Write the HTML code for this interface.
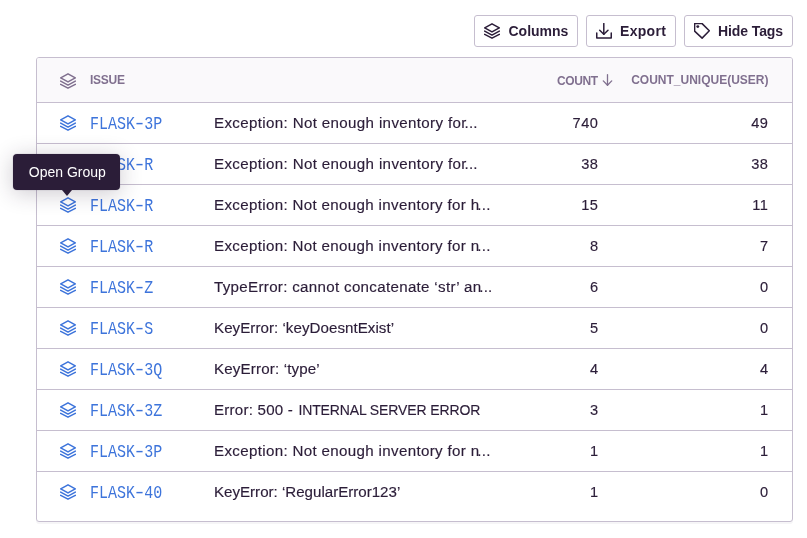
<!DOCTYPE html>
<html><head><meta charset="utf-8">
<style>
*{box-sizing:border-box;margin:0;padding:0}
.wrap{position:absolute;left:0;top:0;width:807px;height:538px;will-change:transform}
html,body{width:807px;height:538px;background:#fff;overflow:hidden;font-family:"Liberation Sans",sans-serif;color:#2b1d38}
.abs{position:absolute}
.btn{position:absolute;top:15px;height:32px;border:1px solid #c6becf;border-radius:3px;background:#fff}
.btn svg{position:absolute;top:7px}
.btn span{position:absolute;top:7.3px;font-weight:bold;font-size:14px;line-height:16px;color:#2b1d38;white-space:nowrap}
.panel{position:absolute;left:36px;top:57px;width:757px;height:465px;border:1px solid #c6becf;border-radius:3px;box-shadow:0 2px 0 rgba(37,11,54,0.04);overflow:hidden;background:#fff}
.hdr{position:absolute;left:0;top:0;width:755px;height:45px;background:#faf9fb;border-bottom:1px solid #c6becf}
.hdr span{position:absolute;font-weight:bold;font-size:12px;line-height:14px;color:#80708f;white-space:nowrap}
.row{position:absolute;left:0;width:755px;height:41px;border-bottom:1px solid #c6becf}
.row svg{position:absolute;left:23px;top:12px}
.row .id{position:absolute;left:53.1px;top:13.0px;transform:scaleY(1.18);transform-origin:0 50%;font-family:"Liberation Mono",monospace;font-size:15px;line-height:18px;color:#3d74db;white-space:nowrap}
.row .d{position:absolute;left:177px;top:10.5px;-webkit-text-stroke:0.15px #2b1d38;transform:scaleX(1.08);transform-origin:0 50%;font-size:14px;line-height:18px;white-space:nowrap;color:#2b1d38}
.dash{display:inline-block;transform:translateY(0.6px) scaleX(1.5)}
.row .ell{letter-spacing:0.2px;margin-left:-2px}
.row .n1{-webkit-text-stroke:0.15px #2b1d38;position:absolute;right:194px;top:10.5px;font-size:14.6px;line-height:18px;text-align:right;letter-spacing:0.6px;margin-right:-0.6px}
.row .n2{-webkit-text-stroke:0.15px #2b1d38;position:absolute;right:24px;top:10.5px;font-size:14.6px;line-height:18px;text-align:right;letter-spacing:0.6px;margin-right:-0.6px}
.tip{position:absolute;left:13px;top:154px;width:107px;height:36px;background:#2b1d38;border-radius:4px;box-shadow:0 0 0 1px rgba(43,29,56,0.05),0 3px 22px rgba(43,29,56,0.24)}
.tip span{position:absolute;left:15.8px;top:9px;font-size:14px;line-height:18px;color:#fff;white-space:nowrap}
.arrow{position:absolute;left:62.3px;top:189.5px;width:0;height:0;border-left:5.3px solid transparent;border-right:5.3px solid transparent;border-top:6.6px solid #2b1d38}
</style></head><body><div class="wrap">

<div class="btn" style="left:474px;width:104px">
  <svg style="left:9px" width="16" height="16" viewBox="0 0 16 16" fill="none" stroke="#2b1d38" stroke-width="1.5" stroke-linejoin="round" stroke-linecap="round"><path d="M8 0.8L15.3 4.9L8 8.9L0.7 4.9Z"/><path d="M0.7 8.1L8 12.1L15.3 8.1"/><path d="M0.7 11.3L8 15.2L15.3 11.3"/></svg>
  <span style="left:33.5px">Columns</span>
</div>
<div class="btn" style="left:586px;width:90px">
  <svg style="left:9px" width="16" height="16" viewBox="0 0 16 16" fill="none" stroke="#2b1d38" stroke-width="1.5" stroke-linejoin="round" stroke-linecap="round"><path d="M7.8 0.6V11.2"/><path d="M3.7 7.2L7.8 11.3L12.0 7.2"/><path d="M0.75 9.9V15.1H15.25V9.9"/></svg>
  <span style="left:33px;letter-spacing:0.3px">Export</span>
</div>
<div class="btn" style="left:684px;width:109px">
  <svg style="left:9px" width="16" height="16" viewBox="0 0 16 16" fill="none" stroke="#2b1d38" stroke-width="1.5" stroke-linejoin="round"><path d="M0.6 0.6H8.1L15.3 7.8L8.1 15.1L0.6 8.1Z"/><circle cx="3.8" cy="3.6" r="1.45" fill="#2b1d38" stroke="none"/></svg>
  <span style="left:33px;letter-spacing:-0.1px">Hide Tags</span>
</div>

<div class="panel">
  <div class="hdr">
    <svg class="abs" style="left:23px;top:15px" width="16" height="16" viewBox="0 0 16 16" fill="none" stroke="#80708f" stroke-width="1.5" stroke-linejoin="round" stroke-linecap="round"><path d="M8 0.8L15.3 4.9L8 8.9L0.7 4.9Z"/><path d="M0.7 8.1L8 12.1L15.3 8.1"/><path d="M0.7 11.3L8 15.2L15.3 11.3"/></svg>
    <span style="left:53px;top:15.4px;letter-spacing:-0.25px">ISSUE</span>
    <span style="left:520px;top:15.6px;letter-spacing:-0.4px">COUNT</span>
    <svg class="abs" style="left:565px;top:16px" width="11" height="12" viewBox="0 0 11 12" fill="none" stroke="#80708f" stroke-width="1.3" stroke-linecap="round" stroke-linejoin="round"><path d="M5.5 0.7V11.2"/><path d="M1.3 6.9L5.5 11.2L9.7 6.9"/></svg>
    <span style="right:23.5px;top:14.9px">COUNT_UNIQUE(USER)</span>
  </div>
    <div class="row" style="top:45px"><svg width="16" height="16" viewBox="0 0 16 16" fill="none" stroke="#3d74db" stroke-width="1.5" stroke-linejoin="round" stroke-linecap="round"><path d="M8 0.8L15.3 4.9L8 8.9L0.7 4.9Z"/><path d="M0.7 8.1L8 12.1L15.3 8.1"/><path d="M0.7 11.3L8 15.2L15.3 11.3"/></svg><span class="id">FLASK<span class=dash>-</span>3P</span><span class="d" style="letter-spacing:0.325px">Exception: Not enough inventory for<span class="ell">...</span></span><span class="n1">740</span><span class="n2">49</span></div>
  <div class="row" style="top:86px"><svg width="16" height="16" viewBox="0 0 16 16" fill="none" stroke="#3d74db" stroke-width="1.5" stroke-linejoin="round" stroke-linecap="round"><path d="M8 0.8L15.3 4.9L8 8.9L0.7 4.9Z"/><path d="M0.7 8.1L8 12.1L15.3 8.1"/><path d="M0.7 11.3L8 15.2L15.3 11.3"/></svg><span class="id">FLASK<span class=dash>-</span>R</span><span class="d" style="letter-spacing:0.325px">Exception: Not enough inventory for<span class="ell">...</span></span><span class="n1">38</span><span class="n2">38</span></div>
  <div class="row" style="top:127px"><svg width="16" height="16" viewBox="0 0 16 16" fill="none" stroke="#3d74db" stroke-width="1.5" stroke-linejoin="round" stroke-linecap="round"><path d="M8 0.8L15.3 4.9L8 8.9L0.7 4.9Z"/><path d="M0.7 8.1L8 12.1L15.3 8.1"/><path d="M0.7 11.3L8 15.2L15.3 11.3"/></svg><span class="id">FLASK<span class=dash>-</span>R</span><span class="d" style="letter-spacing:0.312px">Exception: Not enough inventory for h<span class="ell">...</span></span><span class="n1">15</span><span class="n2">11</span></div>
  <div class="row" style="top:168px"><svg width="16" height="16" viewBox="0 0 16 16" fill="none" stroke="#3d74db" stroke-width="1.5" stroke-linejoin="round" stroke-linecap="round"><path d="M8 0.8L15.3 4.9L8 8.9L0.7 4.9Z"/><path d="M0.7 8.1L8 12.1L15.3 8.1"/><path d="M0.7 11.3L8 15.2L15.3 11.3"/></svg><span class="id">FLASK<span class=dash>-</span>R</span><span class="d" style="letter-spacing:0.312px">Exception: Not enough inventory for n<span class="ell">...</span></span><span class="n1">8</span><span class="n2">7</span></div>
  <div class="row" style="top:209px"><svg width="16" height="16" viewBox="0 0 16 16" fill="none" stroke="#3d74db" stroke-width="1.5" stroke-linejoin="round" stroke-linecap="round"><path d="M8 0.8L15.3 4.9L8 8.9L0.7 4.9Z"/><path d="M0.7 8.1L8 12.1L15.3 8.1"/><path d="M0.7 11.3L8 15.2L15.3 11.3"/></svg><span class="id">FLASK<span class=dash>-</span>Z</span><span class="d" style="letter-spacing:0.290px">TypeError: cannot concatenate ‘str’ an<span class="ell">...</span></span><span class="n1">6</span><span class="n2">0</span></div>
  <div class="row" style="top:250px"><svg width="16" height="16" viewBox="0 0 16 16" fill="none" stroke="#3d74db" stroke-width="1.5" stroke-linejoin="round" stroke-linecap="round"><path d="M8 0.8L15.3 4.9L8 8.9L0.7 4.9Z"/><path d="M0.7 8.1L8 12.1L15.3 8.1"/><path d="M0.7 11.3L8 15.2L15.3 11.3"/></svg><span class="id">FLASK<span class=dash>-</span>S</span><span class="d" style="letter-spacing:0.038px">KeyError: ‘keyDoesntExist’</span><span class="n1">5</span><span class="n2">0</span></div>
  <div class="row" style="top:291px"><svg width="16" height="16" viewBox="0 0 16 16" fill="none" stroke="#3d74db" stroke-width="1.5" stroke-linejoin="round" stroke-linecap="round"><path d="M8 0.8L15.3 4.9L8 8.9L0.7 4.9Z"/><path d="M0.7 8.1L8 12.1L15.3 8.1"/><path d="M0.7 11.3L8 15.2L15.3 11.3"/></svg><span class="id">FLASK<span class=dash>-</span>3Q</span><span class="d" style="letter-spacing:0.147px">KeyError: ‘type’</span><span class="n1">4</span><span class="n2">4</span></div>
  <div class="row" style="top:332px"><svg width="16" height="16" viewBox="0 0 16 16" fill="none" stroke="#3d74db" stroke-width="1.5" stroke-linejoin="round" stroke-linecap="round"><path d="M8 0.8L15.3 4.9L8 8.9L0.7 4.9Z"/><path d="M0.7 8.1L8 12.1L15.3 8.1"/><path d="M0.7 11.3L8 15.2L15.3 11.3"/></svg><span class="id">FLASK<span class=dash>-</span>3Z</span><span class="d" style="letter-spacing:0.200px">Error: 500 - </span><span class="d" style="left:261.40px;transform:none;letter-spacing:-0.125px">INTERNAL SERVER ERROR</span><span class="n1">3</span><span class="n2">1</span></div>
  <div class="row" style="top:373px"><svg width="16" height="16" viewBox="0 0 16 16" fill="none" stroke="#3d74db" stroke-width="1.5" stroke-linejoin="round" stroke-linecap="round"><path d="M8 0.8L15.3 4.9L8 8.9L0.7 4.9Z"/><path d="M0.7 8.1L8 12.1L15.3 8.1"/><path d="M0.7 11.3L8 15.2L15.3 11.3"/></svg><span class="id">FLASK<span class=dash>-</span>3P</span><span class="d" style="letter-spacing:0.312px">Exception: Not enough inventory for n<span class="ell">...</span></span><span class="n1">1</span><span class="n2">1</span></div>
  <div class="row" style="top:414px;height:49px;border-bottom:none"><svg width="16" height="16" viewBox="0 0 16 16" fill="none" stroke="#3d74db" stroke-width="1.5" stroke-linejoin="round" stroke-linecap="round"><path d="M8 0.8L15.3 4.9L8 8.9L0.7 4.9Z"/><path d="M0.7 8.1L8 12.1L15.3 8.1"/><path d="M0.7 11.3L8 15.2L15.3 11.3"/></svg><span class="id">FLASK<span class=dash>-</span>40</span><span class="d" style="letter-spacing:-0.011px">KeyError: ‘RegularError123’</span><span class="n1">1</span><span class="n2">0</span></div>
</div>

<div class="tip"><span>Open Group</span></div>
<div class="arrow"></div>

</div></body></html>
